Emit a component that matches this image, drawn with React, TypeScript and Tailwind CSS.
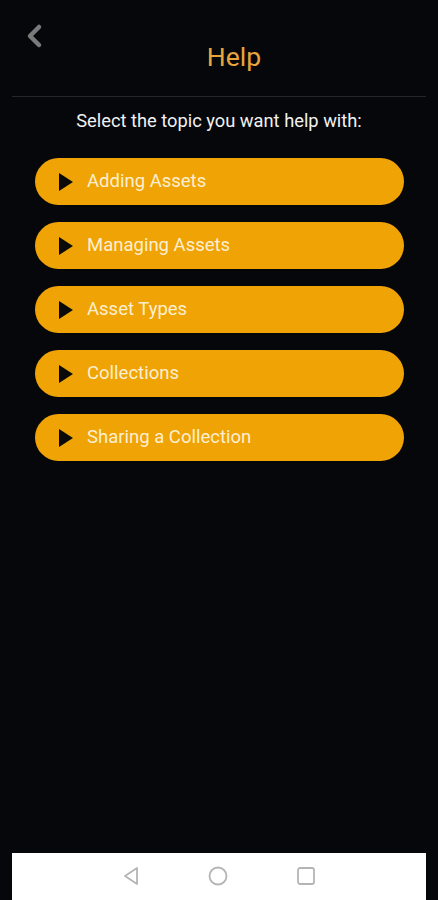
import React from 'react';

const topics = ['Adding Assets', 'Managing Assets', 'Asset Types', 'Collections', 'Sharing a Collection'];

const App: React.FC = () => {
  return (
    <div
      className="flex flex-col w-[438px] h-[900px] bg-[#05070a]"
      style={{ fontFamily: 'Roboto, "Liberation Sans", sans-serif' }}
    >
      {/* Header */}
      <div className="relative h-[97px] mx-3 border-b border-[#23262b] flex items-center justify-center">
        <button className="absolute left-[12px] top-[22px] text-[#7a7a7a]">
          <svg width="20" height="28" viewBox="0 0 20 28" fill="none">
            <path d="M15 5 L6 14 L15 23" stroke="currentColor" strokeWidth="4.5" strokeLinecap="round" strokeLinejoin="round" />
          </svg>
        </button>
        <h1 className="pt-[18px] pl-[30px] text-[26.5px] text-[#e9a43b]">Help</h1>
      </div>

      <p className="mt-[10px] text-center text-[18.3px] text-[#f1f1f1]">Select the topic you want help with:</p>

      {/* Topics */}
      <div className="flex flex-col gap-[17px] mt-[24px] pl-[35px] pr-[34px]">
        {topics.map(t => (
          <button
            key={t}
            className="flex items-center h-[47px] rounded-full bg-[#f0a304] pl-[24px]"
          >
            <svg width="14" height="18" viewBox="0 0 14 18" className="flex-shrink-0">
              <path d="M0 0 L14 9 L0 18 Z" fill="#0a0a0a" />
            </svg>
            <span className="ml-[14px] text-[18.5px] text-[#fcefd2]">{t}</span>
          </button>
        ))}
      </div>

      <div className="flex-1" />

      {/* Nav bar */}
      <div className="mx-3 h-[47px] bg-white flex items-center justify-center gap-[68px] pb-[2px]">
        <svg width="18" height="20" viewBox="0 0 18 20" fill="none">
          <path d="M15 2 L3 10 L15 18 Z" stroke="#b5b5b5" strokeWidth="1.8" strokeLinejoin="round" />
        </svg>
        <svg width="20" height="20" viewBox="0 0 20 20" fill="none">
          <circle cx="10" cy="10" r="8.5" stroke="#b5b5b5" strokeWidth="1.8" />
        </svg>
        <svg width="20" height="20" viewBox="0 0 20 20" fill="none">
          <rect x="2" y="2" width="16" height="16" rx="2" stroke="#b5b5b5" strokeWidth="1.8" />
        </svg>
      </div>
    </div>
  );
};

export default App;
